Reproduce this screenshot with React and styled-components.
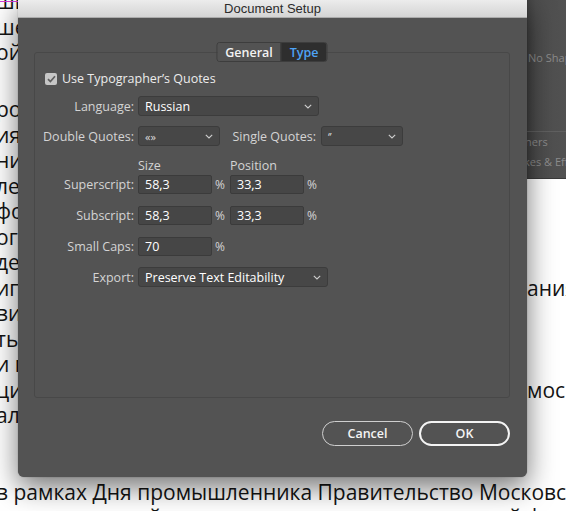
import React from "react";
import styled, { createGlobalStyle } from "styled-components";

const GlobalStyle = createGlobalStyle`
  html, body { margin: 0; padding: 0; }
  body { width: 566px; height: 511px; overflow: hidden; background: #fff; }
  * { box-sizing: border-box; }
`;

const UI = `"Open Sans", "Noto Sans", sans-serif`;

const Page = styled.div`
  position: relative;
  width: 566px;
  height: 511px;
  overflow: hidden;
  background: #ffffff;
`;

const DocText = styled.div`
  margin-top: -11px;
  margin-left: -4px;
  font-family: "Open Sans", "Noto Sans", sans-serif;
  font-size: 21px;
  line-height: 25.5px;
  color: #141414;
  white-space: nowrap;
`;

const Line = styled.div`
  display: grid;
  grid-template-columns: 531px 1fr;
  height: ${(p) => p.$h || 25.5}px;
  overflow: hidden;
`;

const Cell = styled.span`
  overflow: hidden;
`;

const FullLine = styled.div`
  height: 25.5px;
  white-space: nowrap;
`;

const FrameEdge = styled.div`
  position: absolute;
  top: 1px;
  left: 0;
  width: 18px;
  height: 1px;
  background: #d63fd6;
`;

const SidePanel = styled.div`
  position: absolute;
  top: 0;
  right: 0;
  width: 80px;
  height: 179px;
  background: linear-gradient(90deg, #3e3e3e 0%, #444 52%, #4d4d4d 62%, #525252 100%);
  border-bottom: 1px solid #3a3a3a;
  display: flex;
  flex-direction: column;
  font-family: ${UI};
  font-size: 11px;
  color: #8c8c8c;
  white-space: nowrap;
  overflow: hidden;
`;

const PanelTop = styled.div`
  flex: none;
  height: 132px;
  padding-top: 50px;
  padding-left: ${(p) => p.$indent}px;
  border-bottom: 1px solid #606060;
`;

const PanelRow = styled.div`
  height: 20px;
  line-height: 20px;
  padding-left: ${(p) => p.$indent}px;
  &:first-of-type { margin-top: 4px; }
`;

const Dialog = styled.div`
  position: absolute;
  left: 18px;
  top: 0;
  width: 509px;
  height: 477px;
  background: #535353;
  border-radius: 0 0 6px 6px;
  box-shadow: 0 10px 28px rgba(0, 0, 0, 0.55), 0 0 1px rgba(0, 0, 0, 0.5);
  display: flex;
  flex-direction: column;
  font-family: ${UI};
`;

const TitleBar = styled.div`
  flex: none;
  height: 18px;
  background: linear-gradient(#ececec, #d4d4d4);
  border-bottom: 1px solid #ababab;
  display: flex;
  align-items: center;
  justify-content: center;
  font-family: "Liberation Sans", Arial, sans-serif;
  font-size: 13px;
  color: #2b2b2b;
`;

const Body = styled.div`
  flex: 1;
  display: flex;
  flex-direction: column;
  padding: 34px 17px 0 16px;
`;

const GroupBox = styled.div`
  position: relative;
  height: 346px;
  border: 1px solid #484848;
  border-radius: 3px;
  padding-top: 19px;
  display: flex;
  flex-direction: column;
`;

const Tabs = styled.div`
  position: absolute;
  top: -11px;
  left: 50%;
  transform: translateX(-50%);
  display: flex;
  height: 20px;
  border: 1px solid #3d3d3d;
  border-radius: 3px;
  overflow: hidden;
  font-size: 12.5px;
  font-weight: 600;
`;

const Tab = styled.div`
  width: ${(p) => p.$w}px;
  display: flex;
  align-items: center;
  justify-content: center;
  background: ${(p) => (p.$active ? "#2e2e2e" : "#535353")};
  color: ${(p) => (p.$active ? "#4ea3f6" : "#f2f2f2")};
  & + & { border-left: 1px solid #3d3d3d; }
`;

const CheckRow = styled.label`
  display: flex;
  align-items: center;
  gap: 5px;
  padding-left: 10px;
  height: 13px;
  font-size: 12.5px;
  color: #ececec;
`;

const CheckBox = styled.span`
  width: 12px;
  height: 12px;
  border-radius: 2px;
  background: #c6c6c6;
  display: flex;
  align-items: center;
  justify-content: center;
`;

const Row = styled.div`
  display: flex;
  align-items: center;
  height: ${(p) => p.$h || 20}px;
  margin-top: ${(p) => p.$mt}px;
`;

const Label = styled.span`
  width: ${(p) => p.$w || 99}px;
  margin-right: ${(p) => (p.$mr === undefined ? 4 : p.$mr)}px;
  text-align: right;
  font-size: 12.5px;
  color: #d4d4d4;
  white-space: nowrap;
`;

const ColHead = styled.span`
  width: ${(p) => p.$w}px;
  font-size: 12.5px;
  color: #d4d4d4;
`;

const Select = styled.div`
  width: ${(p) => p.$w}px;
  height: 20px;
  background: #474747;
  border: 1px solid #3c3c3c;
  border-radius: 3px;
  display: flex;
  align-items: center;
  justify-content: space-between;
  padding: 0 6px 0 6px;
  font-size: 12.5px;
  font-weight: 500;
  color: #ffffff;
`;

const QuoteValue = styled.span`
  font-size: 11px;
  font-weight: 400;
  color: #dcdcdc;
`;

const Field = styled.div`
  width: 74px;
  height: 19px;
  background: #464646;
  border: 1px solid #3b3b3b;
  border-radius: 2px;
  display: flex;
  align-items: center;
  padding-left: 6px;
  font-size: 12.5px;
  font-weight: 500;
  color: #ffffff;
`;

const Unit = styled.span`
  width: 18px;
  padding-left: 3px;
  font-size: 12px;
  color: #d4d4d4;
`;

const Footer = styled.div`
  display: flex;
  justify-content: flex-end;
  gap: 6px;
  margin-top: 23px;
`;

const Button = styled.button`
  width: 91px;
  height: 25px;
  border-radius: 13px;
  background: transparent;
  border: ${(p) => (p.$primary ? "2px solid #f4f4f4" : "1px solid #cfcfcf")};
  color: #f4f4f4;
  font-family: ${UI};
  font-size: 12.5px;
  font-weight: 600;
  padding: 0;
`;

const Chevron = () => (
  <svg width="8" height="5" viewBox="0 0 8 5">
    <polyline points="0.8,0.8 4,4 7.2,0.8" fill="none" stroke="#cfcfcf" strokeWidth="1.1" />
  </svg>
);

const Check = () => (
  <svg width="9" height="8" viewBox="0 0 9 8">
    <polyline points="1,4.2 3.4,6.6 8,1.2" fill="none" stroke="#5e5e5e" strokeWidth="1.7" />
  </svg>
);

const docLines = [
  ["шинного производства, которое было", ""],
  ["шение о поддержке отрасли в целом", ""],
  ["ой промышленности и науки города", ""],
  ["", "", 31.5],
  ["роизводство высокотехнологичной", ""],
  ["ия продукции для городского хозяйства", ""],
  ["ние новых рабочих мест в регионе", ""],
  ["ления и предприятия столицы", ""],
  ["формирования кластеров и технопарков", ""],
  ["оговоров с крупными заказчиками", ""],
  ["деятельности промышленных предприятий", ""],
  ["ипов поддержки и финансирования", "ания в"],
  ["вития инфраструктуры и логистики", ""],
  ["ть новые площадки для производства", ""],
  [" и промышленного развития", ""],
  ["ции и модернизации предприятий", "москов"],
  ["алом и инвестиционным проектам", ""],
  ["", ""],
  ["", ""],
];

export default function App() {
  return (
    <Page>
      <GlobalStyle />
      <DocText>
        {docLines.map(([l, r, h], i) => (
          <Line key={i} $h={h}>
            <Cell>{l || "\u00a0"}</Cell>
            <Cell>{r}</Cell>
          </Line>
        ))}
        <FullLine>в рамках Дня промышленника Правительство Московской</FullLine>
        <FullLine>представителей отрасли, организовывает деловой форум</FullLine>
      </DocText>
      <FrameEdge />

      <SidePanel>
        <PanelTop $indent={42}>No Shape</PanelTop>
        <PanelRow $indent={21}>Corners</PanelRow>
        <PanelRow $indent={17}>Strokes &amp; Effects</PanelRow>
      </SidePanel>

      <Dialog>
        <TitleBar>Document Setup</TitleBar>
        <Body>
          <GroupBox>
            <Tabs>
              <Tab $w={63}>General</Tab>
              <Tab $w={46} $active>Type</Tab>
            </Tabs>

            <CheckRow>
              <CheckBox><Check /></CheckBox>
              Use Typographer’s Quotes
            </CheckRow>

            <Row $mt={11}>
              <Label>Language:</Label>
              <Select $w={181}>Russian<Chevron /></Select>
            </Row>

            <Row $mt={10}>
              <Label>Double Quotes:</Label>
              <Select $w={82}><QuoteValue>«»</QuoteValue><Chevron /></Select>
              <Label $w={96} $mr={5}>Single Quotes:</Label>
              <Select $w={82}><QuoteValue>‘’</QuoteValue><Chevron /></Select>
            </Row>

            <Row $mt={12} $h={14}>
              <Label />
              <ColHead $w={92}>Size</ColHead>
              <ColHead $w={92}>Position</ColHead>
            </Row>

            <Row $mt={3} $h={19}>
              <Label>Superscript:</Label>
              <Field>58,3</Field>
              <Unit>%</Unit>
              <Field>33,3</Field>
              <Unit>%</Unit>
            </Row>

            <Row $mt={12} $h={19}>
              <Label>Subscript:</Label>
              <Field>58,3</Field>
              <Unit>%</Unit>
              <Field>33,3</Field>
              <Unit>%</Unit>
            </Row>

            <Row $mt={12} $h={19}>
              <Label>Small Caps:</Label>
              <Field>70</Field>
              <Unit>%</Unit>
            </Row>

            <Row $mt={11}>
              <Label>Export:</Label>
              <Select $w={190}>Preserve Text Editability<Chevron /></Select>
            </Row>
          </GroupBox>

          <Footer>
            <Button>Cancel</Button>
            <Button $primary>OK</Button>
          </Footer>
        </Body>
      </Dialog>
    </Page>
  );
}
